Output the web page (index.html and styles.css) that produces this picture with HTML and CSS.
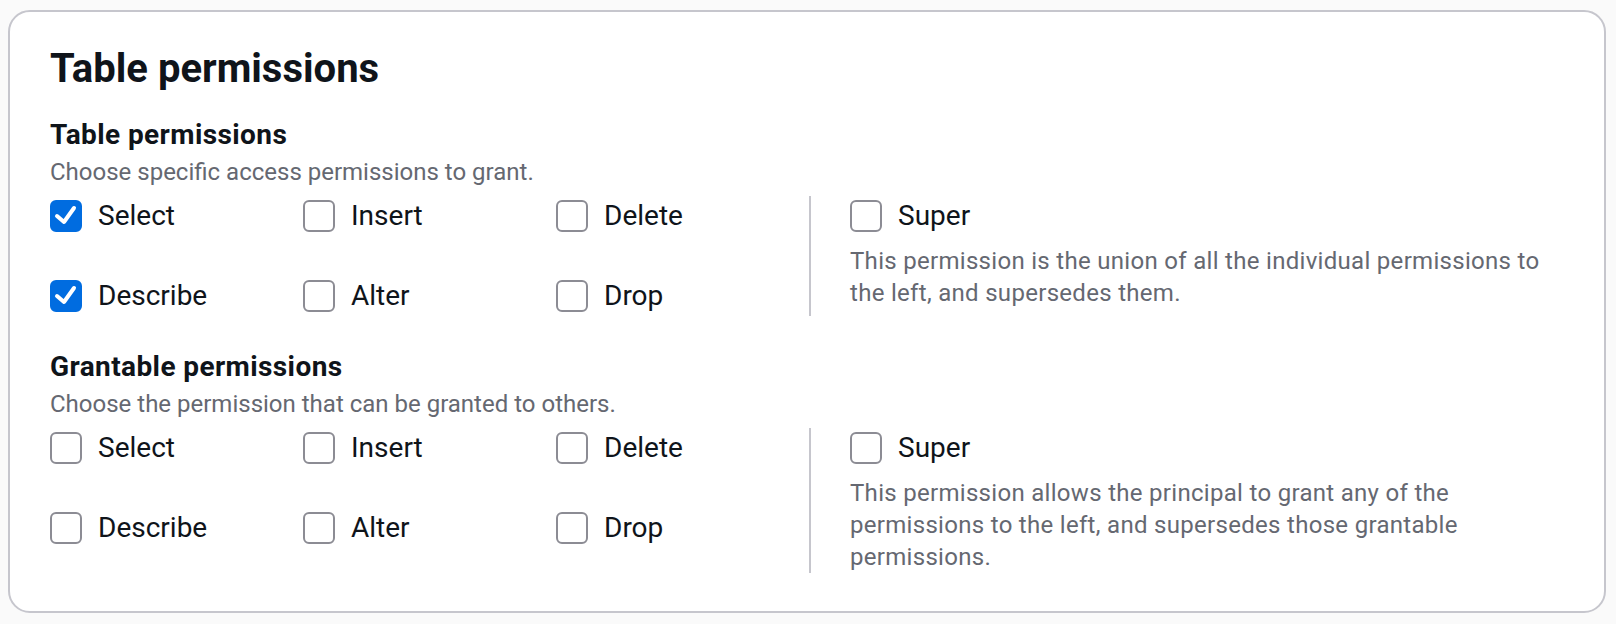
FILE: index.html
```html
<!DOCTYPE html>
<html lang="en">
<head>
    <meta charset="UTF-8">
    <meta name="viewport" content="width=device-width, initial-scale=1.0">
    <title>Table permissions</title>
    <link rel="stylesheet" href="styles.css">
</head>
<body>
    <div class="container">
        <h2 class="title">Table permissions</h2>

        <div class="field">
            <div class="field-label">Table permissions</div>
            <div class="field-desc">Choose specific access permissions to grant.</div>
            <div class="options">
                <div class="option-grid">
                    <label class="option"><span class="cb checked"><svg viewBox="0 0 14 14"><polyline points="2.5,7 6,10 11,3"/></svg></span>Select</label>
                    <label class="option"><span class="cb"></span>Insert</label>
                    <label class="option"><span class="cb"></span>Delete</label>
                    <label class="option"><span class="cb checked"><svg viewBox="0 0 14 14"><polyline points="2.5,7 6,10 11,3"/></svg></span>Describe</label>
                    <label class="option"><span class="cb"></span>Alter</label>
                    <label class="option"><span class="cb"></span>Drop</label>
                </div>
                <div class="super">
                    <label class="option"><span class="cb"></span>Super</label>
                    <p class="super-desc">This permission is the union of all the individual permissions to the left, and supersedes them.</p>
                </div>
            </div>
        </div>

        <div class="field">
            <div class="field-label">Grantable permissions</div>
            <div class="field-desc">Choose the permission that can be granted to others.</div>
            <div class="options">
                <div class="option-grid">
                    <label class="option"><span class="cb"></span>Select</label>
                    <label class="option"><span class="cb"></span>Insert</label>
                    <label class="option"><span class="cb"></span>Delete</label>
                    <label class="option"><span class="cb"></span>Describe</label>
                    <label class="option"><span class="cb"></span>Alter</label>
                    <label class="option"><span class="cb"></span>Drop</label>
                </div>
                <div class="super">
                    <label class="option"><span class="cb"></span>Super</label>
                    <p class="super-desc">This permission allows the principal to grant any of the permissions to the left, and supersedes those grantable permissions.</p>
                </div>
            </div>
        </div>
    </div>
</body>
</html>
```
FILE: styles.css
```css
html {
    background-color: #fafafa;
}
body {
    font-family: Roboto, "Liberation Sans", Arial, sans-serif;
    color: #0f141a;
    margin: 0;
    padding: 0;
}
.container {
    margin: 10px 10px 0 8px;
    padding: 33px 40px 38px;
    background-color: #fff;
    border: 2px solid #c6c6cd;
    border-radius: 22px;
}
.title {
    margin: 0 0 24px;
    font-size: 40px;
    line-height: 48px;
    font-weight: 700;
}
.field + .field {
    margin-top: 33px;
}
.field-label {
    font-size: 28px;
    line-height: 36px;
    font-weight: 700;
    letter-spacing: 0.4px;
}
.field-desc {
    margin-top: 3px;
    font-size: 24px;
    line-height: 32px;
    color: #656871;
}
.options {
    display: flex;
    margin-top: 8px;
}
.option-grid {
    display: grid;
    grid-template-columns: repeat(3, 253px);
    row-gap: 40px;
    align-content: start;
}
.option {
    display: flex;
    align-items: center;
    gap: 16px;
    height: 40px;
    font-size: 28px;
    line-height: 40px;
    cursor: pointer;
}
.cb {
    box-sizing: border-box;
    width: 32px;
    height: 32px;
    flex: none;
    border: 2px solid #8c8c94;
    border-radius: 6px;
    background-color: #fff;
}
.cb.checked {
    border-color: #006ce0;
    background-color: #006ce0;
}
.cb svg {
    display: block;
    width: 28px;
    height: 28px;
    fill: none;
    stroke: #fff;
    stroke-width: 2;
    stroke-linecap: round;
    stroke-linejoin: round;
}
.super {
    flex: 1;
    border-left: 2px solid #c6c6cd;
    padding-left: 39px;
}
.super-desc {
    max-width: 690px;
    margin: 9px 0 0;
    font-size: 24px;
    line-height: 32px;
    letter-spacing: 0.3px;
    color: #656871;
}
```
